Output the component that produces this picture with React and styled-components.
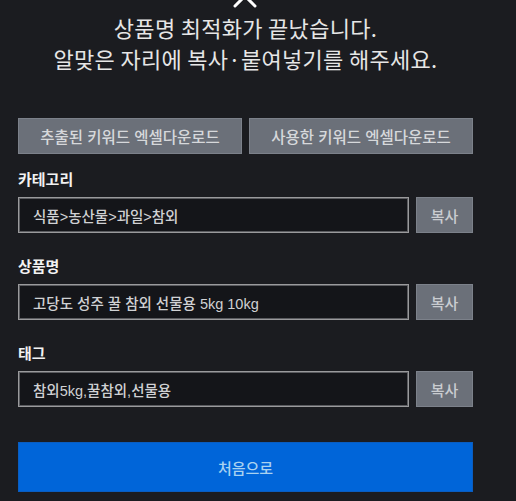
import styled, { createGlobalStyle } from "styled-components";

const GlobalStyle = createGlobalStyle`
	body {
		margin: 0;
		background: #1b1c20;
		font-family: "Noto Sans CJK KR", "Noto Sans", sans-serif;
	}
`;

const latin = `"Liberation Sans", "Noto Sans CJK KR", sans-serif`;

const Page = styled.div`
	width: 455px;
	min-height: 501px;
	margin-left: 18px;
	overflow: hidden;
`;

const Close = styled.svg`
	display: block;
	width: 24px;
	height: 24px;
	margin: -16px auto 0;
	position: relative;
	left: -1px;
`;

const Title = styled.h1`
	margin: 4px 0 0;
	color: #e6e6e6;
	font-size: 22px;
	font-weight: 400;
	line-height: 31px;
	text-align: center;
	letter-spacing: 0.3px;
`;

const Downloads = styled.div`
	display: grid;
	grid-template-columns: 1fr 1fr;
	gap: 7px;
	margin-top: 44px;
`;

const GreyButton = styled.button`
	height: 36px;
	border: 1px solid #7c818a;
	background: #6b7079;
	color: #d6d8db;
	font-family: ${latin};
	font-size: 15.5px;
	font-weight: 500;
	padding: 0;
	cursor: pointer;
`;

const Field = styled.div`
	margin-top: ${p => p.first ? 15 : 23}px;
`;

const Label = styled.div`
	color: #f2f2f2;
	font-size: 15px;
	font-weight: 700;
	line-height: 20px;
	margin-bottom: 8px;
`;

const Row = styled.div`
	display: flex;
	gap: 7px;
	height: 36px;
`;

const Value = styled.div`
	flex: 1;
	display: flex;
	align-items: center;
	padding-left: 14px;
	border: 1px solid #9a9a9c;
	box-shadow: inset 0 0 0 1px #5a5b5f;
	background: #141519;
	color: #d0d1d3;
	font-family: ${latin};
	font-size: 14.5px;
	font-weight: 500;
`;

const CopyButton = styled(GreyButton)`
	width: 57px;
	height: 36px;
	font-size: 15px;
	color: #c9ccd0;
`;

const HomeButton = styled.button`
	display: block;
	width: 100%;
	height: 50px;
	margin-top: 35px;
	border: 1px solid #0a5dc0;
	background: #0065d9;
	color: #a9d2f0;
	font-family: inherit;
	font-size: 15px;
	font-weight: 500;
	cursor: pointer;
`;

const fields = [
	{ label: "카테고리", value: "식품>농산물>과일>참외" },
	{ label: "상품명", value: "고당도 성주 꿀 참외 선물용 5kg 10kg" },
	{ label: "태그", value: "참외5kg,꿀참외,선물용" },
];

const App = () => {
	return (
		<Page>
			<GlobalStyle />
			<Close viewBox="0 0 24 24" fill="none" stroke="#fff" strokeWidth="3" strokeLinecap="round">
				<path d="M2 2L22 22M22 2L2 22" />
			</Close>
			<Title>
				상품명 최적화가 끝났습니다.<br />
				알맞은 자리에 복사·붙여넣기를 해주세요.
			</Title>
			<Downloads>
				<GreyButton>추출된 키워드 엑셀다운로드</GreyButton>
				<GreyButton>사용한 키워드 엑셀다운로드</GreyButton>
			</Downloads>
			{fields.map((f, i) => (
				<Field key={f.label} first={i === 0}>
					<Label>{f.label}</Label>
					<Row>
						<Value>{f.value}</Value>
						<CopyButton>복사</CopyButton>
					</Row>
				</Field>
			))}
			<HomeButton>처음으로</HomeButton>
		</Page>
	);
};

export default App;
